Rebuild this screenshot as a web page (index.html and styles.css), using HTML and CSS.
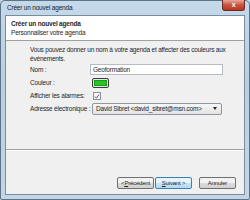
FILE: index.html
```html
<!DOCTYPE html>
<html>
<head>
<meta charset="utf-8">
<link rel="stylesheet" href="styles.css">
</head>
<body>
<div class="window">
  <div class="titlebar">
    <span class="title">Créer un nouvel agenda</span>
    <span class="close">x</span>
  </div>
  <div class="client">
    <div class="header">
      <div class="h1">Créer un nouvel agenda</div>
      <div class="h2">Personnaliser votre agenda</div>
    </div>
    <div class="content">
      <p class="intro">Vous pouvez donner un nom à votre agenda et affecter des couleurs aux<br>événements.</p>
      <div class="form">
        <div class="row"><span class="label">Nom :</span><span class="input">Geoformation</span></div>
        <div class="row"><span class="label">Couleur :</span><span class="swatch"><span class="fill"></span></span></div>
        <div class="row"><span class="label">Afficher les alarmes:</span><span class="check">
          <svg width="9" height="9" viewBox="0 0 9 9"><path d="M2.2 4.6 L3.8 6.4 L6.8 2.2" fill="none" stroke="#2a4a8a" stroke-width="1"/></svg></span></div>
        <div class="row"><span class="label">Adresse électronique :</span><span class="select"><span>David Sibret &lt;david_sibret@msn.com&gt;</span><span class="arrow"></span></span></div>
      </div>
    </div>
    <div class="footer">
      <span class="btn">&lt; <u>P</u>récédent</span>
      <span class="btn primary"><u>S</u>uivant &gt;</span>
      <span class="btn cancel">Annuler</span>
    </div>
  </div>
</div>
</body>
</html>
```
FILE: styles.css
```css
* { box-sizing: border-box; }
html, body { margin: 0; padding: 0; }
body {
  width: 250px; height: 200px; overflow: hidden;
  font-family: "Liberation Sans", Arial, sans-serif;
  font-size: 6.5px; letter-spacing: -0.2px; color: #1e1e1e;
  background: #bfd3e4;
  white-space: nowrap;
}
.window {
  width: 250px; height: 200px;
  background: linear-gradient(#c4d9ea, #b9cfe2 40%, #c2d6e7);
  border: 1px solid #5d7387;
  border-radius: 5px 5px 2px 2px;
  display: flex; flex-direction: column;
  padding: 0 4px 4px 4px;
}
.titlebar {
  height: 14px;
  display: flex; align-items: flex-start; justify-content: space-between;
}
.title { padding: 3px 0 0 2px; color: #1a1a1a; }
.close {
  width: 23px; height: 11px; margin-top: -1px;
  background: linear-gradient(#e6a79a, #c8533e 50%, #b8361f);
  border: 1px solid #6e2b22; border-top: none;
  border-radius: 0 0 3px 3px;
  color: #fff; font-size: 7px; font-weight: bold; text-align: center; line-height: 9px;
}
.client {
  flex: 1; display: flex; flex-direction: column;
  border: 1px solid #7b8c9c;
  background: #f0f0f0;
}
.header {
  background: #fff; height: 25px; padding: 3px 0 0 5px;
  border-bottom: 1px solid #a0a0a0;
}
.h1 { font-weight: bold; line-height: 9px; }
.h2 { line-height: 9px; }
.content { flex: 1; padding: 4px 10px 0 24px; }
.intro { margin: 0; line-height: 9px; }
.form { margin-top: 0; display: flex; flex-direction: column; }
.row { display: flex; align-items: center; height: 13px; }
.label { width: 60px; flex: none; }
.input {
  width: 133px; height: 11px; background: #fff;
  border: 1px solid #b5bcc4; padding-left: 2px; line-height: 9px;
}
.swatch {
  margin-left: 2px; width: 17px; height: 10px;
  border: 1px solid #3b3b3b; border-radius: 2px; padding: 1px;
  background: #dfe9f3;
}
.fill { display: block; width: 100%; height: 100%; background: #27c425; border: 1px solid #159b14; }
.check {
  margin-left: 3px; width: 8px; height: 8px; background: #f8f8f8;
  border: 1px solid #8e8f8f; display: flex;
}
.check svg { margin: -1px; }
.select {
  margin-left: 2px; width: 130px; height: 12px;
  border: 1px solid #8f969d; border-radius: 2px;
  background: linear-gradient(#f6f6f6, #e3e3e3);
  display: flex; align-items: center; justify-content: space-between;
  padding: 0 4px 0 3px;
}
.arrow { width: 0; height: 0; border-left: 2px solid transparent; border-right: 2px solid transparent; border-top: 3px solid #222; }
.footer {
  height: 45px; border-top: 1px solid #a0a0a0; box-shadow: inset 0 1px 0 #fff;
  display: flex; justify-content: flex-end; align-items: flex-start;
  padding: 27px 8px 0 0;
}
.btn {
  width: 37px; height: 12px; border: 1px solid #707070; border-radius: 2px;
  background: linear-gradient(#f2f2f2 50%, #dcdcdc 50%, #d0d0d0);
  font-size: 6px; display: flex; align-items: center; justify-content: center;
}
.btn u { text-decoration: underline; }
.btn.primary {
  margin-left: 1px; border-color: #3c7fb1;
  background: linear-gradient(#e5f4fc 50%, #c4e5f6 50%, #b2dbf2);
}
.btn.cancel { margin-left: 7px; }
```
